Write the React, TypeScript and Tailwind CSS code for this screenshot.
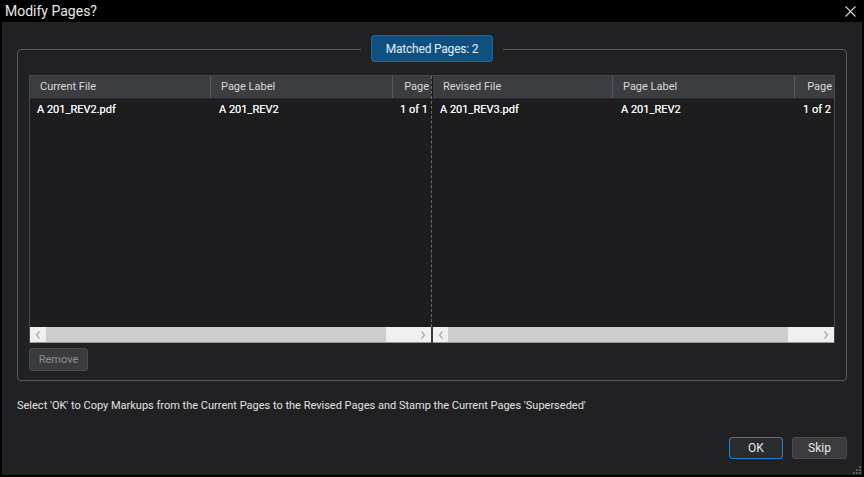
import React from "react";

type Col = { label: string; w: string; align?: "left" | "right"; border?: boolean };

const leftCols: Col[] = [
  { label: "Current File", w: "w-[181px]", border: true },
  { label: "Page Label", w: "w-[182px]", border: true },
  { label: "Page", w: "flex-1", align: "right" },
];
const rightCols: Col[] = [
  { label: "Revised File", w: "w-[180px]", border: true },
  { label: "Page Label", w: "w-[182px]", border: true },
  { label: "Page", w: "flex-1", align: "right" },
];

function ScrollBar({ thumbLeft, thumbRight }: { thumbLeft: string; thumbRight: string }) {
  return (
    <div className="h-[16px] bg-[#f0f0f0] border-b border-[#9a9a9a] flex items-stretch text-[#a8a8a8]">
      <div className={`${thumbLeft} flex items-center justify-center`}>
        <svg width="6" height="8" viewBox="0 0 6 8">
          <path d="M4.5 0.5 L1.5 4 L4.5 7.5" fill="none" stroke="currentColor" strokeWidth="1.2" />
        </svg>
      </div>
      <div className="flex-1 bg-[#cdcdcd]" />
      <div className={`${thumbRight} flex items-center justify-end pr-[5px]`}>
        <svg width="6" height="8" viewBox="0 0 6 8">
          <path d="M1.5 0.5 L4.5 4 L1.5 7.5" fill="none" stroke="currentColor" strokeWidth="1.2" />
        </svg>
      </div>
    </div>
  );
}

function Pane({
  cols,
  row,
  scroll,
}: {
  cols: Col[];
  row: string[];
  scroll: { l: string; r: string };
}) {
  return (
    <div className="flex-1 flex flex-col min-w-0">
      <div className="h-[23px] bg-[#3c3d40] flex border-b border-[#2a2a2c] text-[#d8d8d8]">
        {cols.map((c, i) => (
          <div
            key={i}
            className={`${c.w} h-full flex items-center overflow-hidden whitespace-nowrap ${
              c.border ? "border-r border-[#56575a]" : ""
            } ${c.align === "right" ? "justify-end pr-[2px]" : "pl-[10px]"}`}
          >
            {c.label}
          </div>
        ))}
      </div>
      <div className="flex-1 flex flex-col">
        <div className="h-[22px] flex items-center text-[#f4f4f4] [text-shadow:0_0_0.4px_#f4f4f4]">
          {row.map((t, i) => (
            <div
              key={i}
              className={`${cols[i].w} ${
                i === 2 ? "text-right pr-[3px]" : i === 0 ? "pl-[7px]" : "pl-[8px]"
              } whitespace-nowrap overflow-hidden`}
            >
              {t}
            </div>
          ))}
        </div>
      </div>
      <ScrollBar thumbLeft={scroll.l} thumbRight={scroll.r} />
    </div>
  );
}

export default function App() {
  return (
    <div
      className="w-[864px] h-[477px] bg-black flex flex-col text-[11px] leading-[14px] text-[#e6e6e6]"
      style={{ fontFamily: "Roboto, 'Noto Sans', sans-serif" }}
    >
      {/* Title bar */}
      <div className="h-[22px] flex items-center justify-between pl-[5px] pr-[8px] shrink-0">
        <span className="text-[14px] text-[#e8e8e8]">Modify Pages?</span>
        <svg width="11" height="11" viewBox="0 0 11 11" className="text-[#d0d0d0]">
          <path d="M0.5 0.5 L10.5 10.5 M10.5 0.5 L0.5 10.5" stroke="currentColor" strokeWidth="1.2" />
        </svg>
      </div>

      {/* Dialog body */}
      <div className="flex-1 mx-[2px] mb-[2px] bg-[#212124] flex flex-col pt-[27px] px-[15px] relative">
        {/* Group box */}
        <div className="h-[332px] border border-[#58595c] rounded-[4px] flex flex-col px-[11px] pb-[8px]">
          <div className="-mt-[15px] h-[27px] flex justify-center">
            <div className="px-[10px] bg-[#212124]">
              <div className="h-[27px] w-[122px] rounded-[3px] bg-[#0e5180] border border-[#2a6896] flex items-center justify-center text-[#e6eef5] text-[12px] tracking-[-0.2px]">
                Matched Pages: 2
              </div>
            </div>
          </div>

          {/* Matched pages table */}
          <div className="mt-[13px] h-[268px] bg-[#1d1d1f] border border-[#46474a] border-b-0 flex">
            <Pane
              cols={leftCols}
              row={["A 201_REV2.pdf", "A 201_REV2", "1 of 1"]}
              scroll={{ l: "w-[16px]", r: "w-[45px]" }}
            />
            <div className="w-[2px] flex flex-col bg-[#1d1d1f]">
              <div className="flex-1 border-l border-dashed border-[#6a6b6e]" />
              <div className="h-[16px] bg-[#3a3a3a]" />
            </div>
            <Pane
              cols={rightCols}
              row={["A 201_REV3.pdf", "A 201_REV2", "1 of 2"]}
              scroll={{ l: "w-[15px]", r: "w-[46px]" }}
            />
          </div>

          <div className="mt-[5px]">
            <button className="h-[23px] w-[59px] rounded-[3px] bg-[#3a3b3e] border border-[#4a4b4e] text-[#8d8e91] text-[11px]">
              Remove
            </button>
          </div>
        </div>

        <div className="mt-[18px] text-[#e2e2e2]">
          Select 'OK' to Copy Markups from the Current Pages to the Revised Pages and Stamp the Current Pages 'Superseded'
        </div>

        <div className="mt-[24px] flex justify-end gap-[9px]">
          <button className="h-[22px] w-[54px] rounded-[3px] bg-[#2b2c2f] border border-[#1e7fd0] text-[#e8e8e8] text-[12px]">
            OK
          </button>
          <button className="h-[22px] w-[55px] rounded-[3px] bg-[#3a3b3e] border border-[#4a4b4e] text-[#e8e8e8] text-[12px]">
            Skip
          </button>
        </div>

        {/* Resize grip */}
        <svg width="8" height="8" viewBox="0 0 8 8" className="absolute right-[1px] bottom-[1px] text-[#5a5b5e]">
          <rect x="6" y="0" width="2" height="2" fill="currentColor" />
          <rect x="3" y="3" width="2" height="2" fill="currentColor" />
          <rect x="6" y="3" width="2" height="2" fill="currentColor" />
          <rect x="0" y="6" width="2" height="2" fill="currentColor" />
          <rect x="3" y="6" width="2" height="2" fill="currentColor" />
          <rect x="6" y="6" width="2" height="2" fill="currentColor" />
        </svg>
      </div>
    </div>
  );
}
